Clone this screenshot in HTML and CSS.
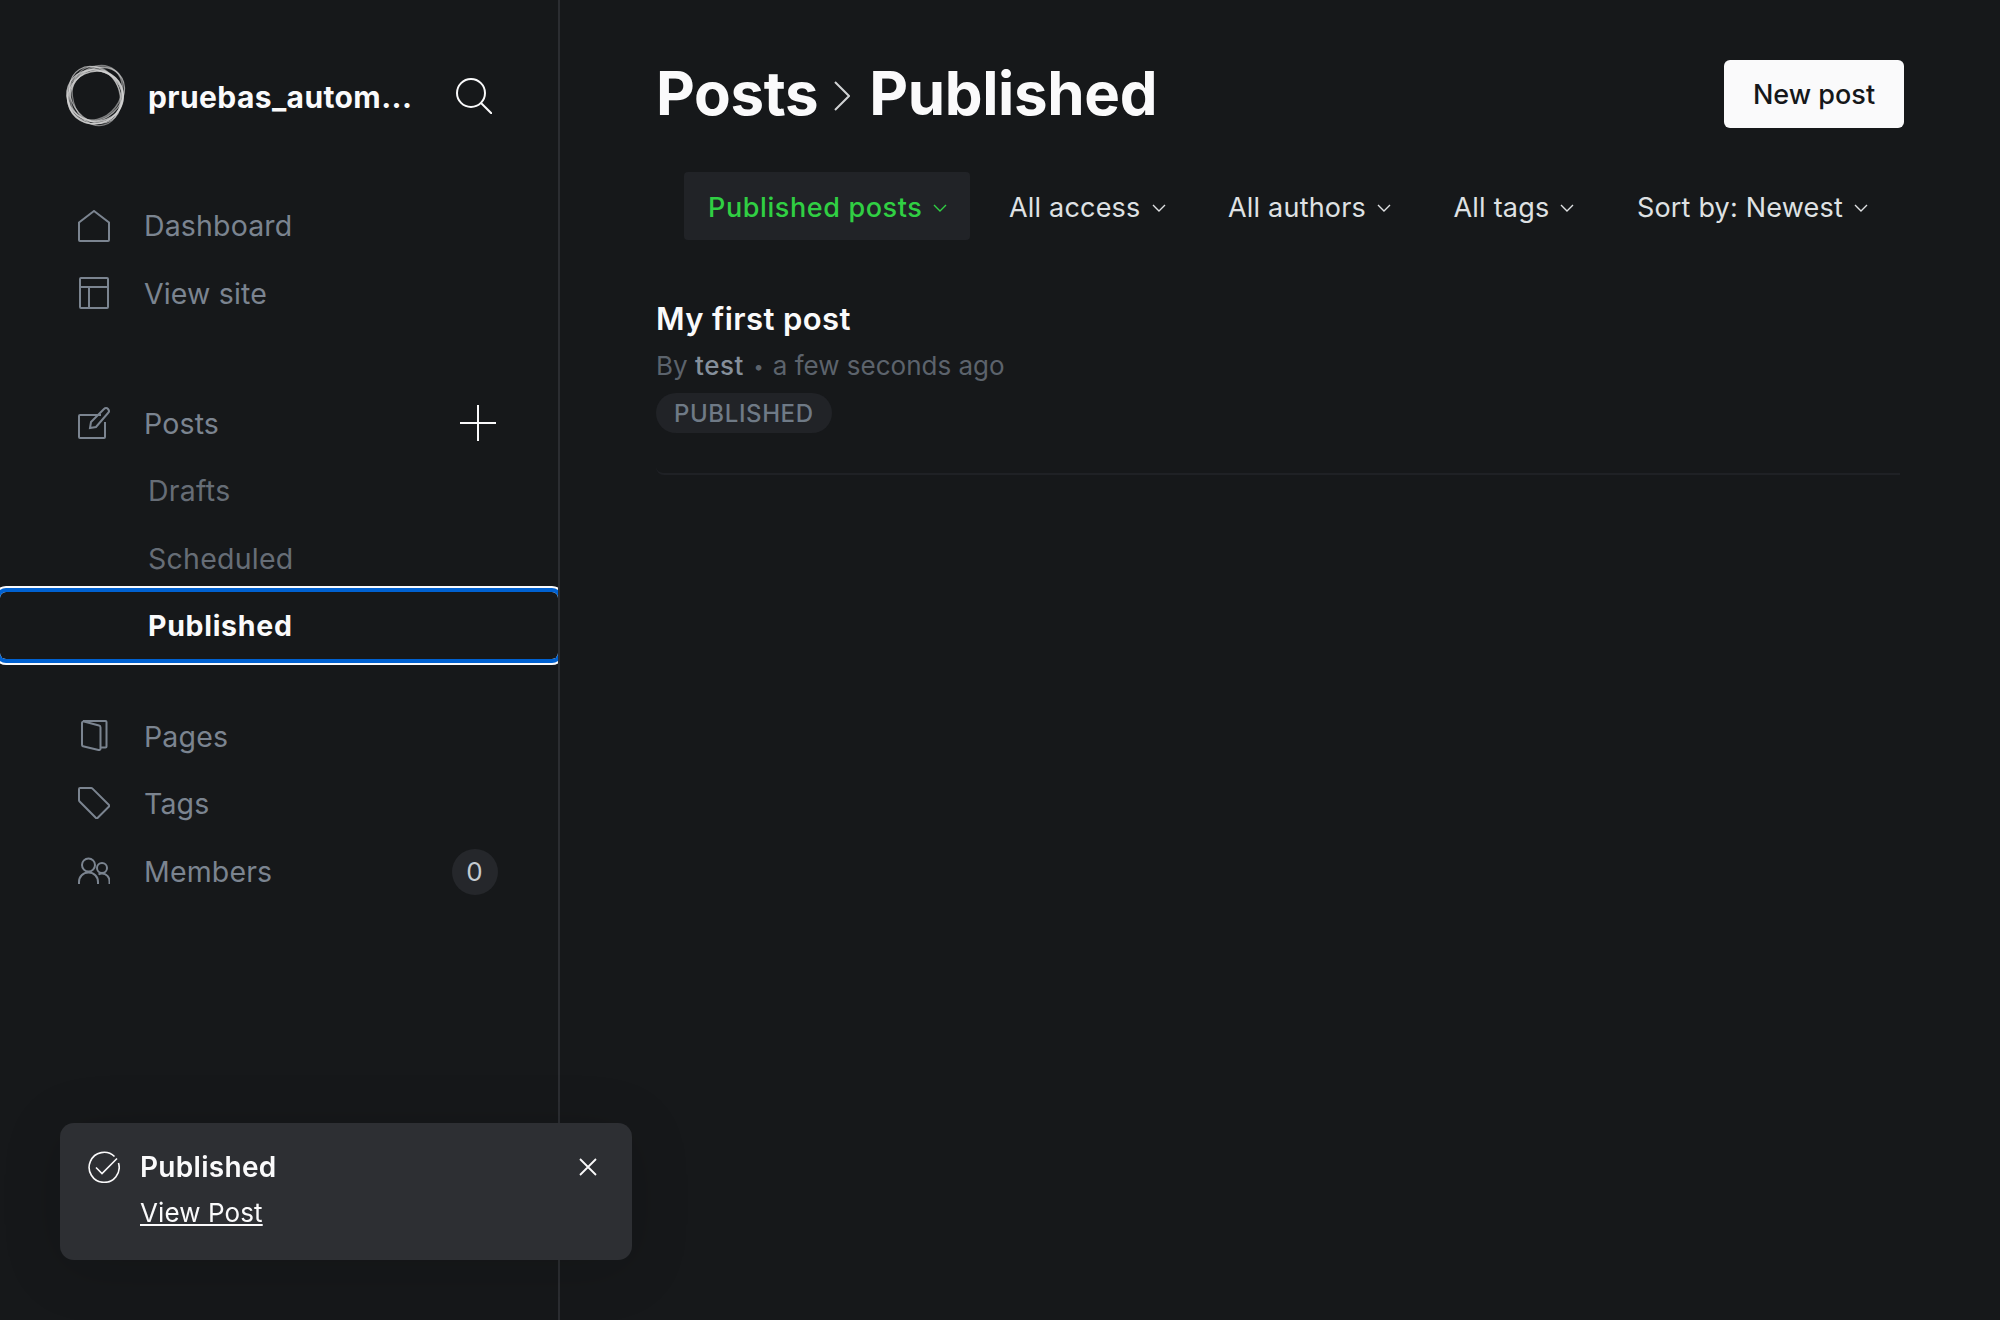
FILE: index.html
```html
<!DOCTYPE html>
<html>

<head>
    <title>Posts - Published</title>
    <link rel="stylesheet" href="styles.css">
</head>

<body>
    <aside class="sidebar">
        <div class="brand">
            <svg class="brand-logo" viewBox="0 0 60 60" fill="none" stroke="#d4d4d4">
                <ellipse cx="28.500" cy="32" rx="28" ry="26" transform="rotate(-25 30 30)" stroke-width="1.600" opacity=".85" />
                <ellipse cx="29" cy="31.500" rx="28" ry="27" transform="rotate(-10 30 30)" stroke-width="1.200" opacity=".6" />
                <ellipse cx="31" cy="30" rx="30" ry="24.500" transform="rotate(-42 30 30)" stroke-width="1.300" opacity=".7" />
                <ellipse cx="32" cy="29" rx="29" ry="24" transform="rotate(-52 30 30)" stroke-width="1.500" opacity=".55" />
                <ellipse cx="29" cy="31" rx="28" ry="25.500" transform="rotate(20 30 30)" stroke-width="1.600" opacity=".8" />
                <ellipse cx="29.500" cy="30.500" rx="30" ry="24" transform="rotate(58 30 30)" stroke-width="1.200" opacity=".7" />
                <ellipse cx="31" cy="30" rx="30" ry="23.500" transform="rotate(75 30 30)" stroke-width="1.200" opacity=".55" />
            </svg>
            <span class="brand-name">pruebas_autom...</span>
            <svg class="brand-search" viewBox="0 0 36 36" fill="none" stroke="#fafafb" stroke-width="2">
                <circle cx="15" cy="15" r="14" />
                <path d="M25 25l11 11" />
            </svg>
        </div>

        <ul class="nav">
            <li class="nav-item">
                <svg class="nav-icon" viewBox="0 0 32 32">
                    <path d="M1 12.500L16 1l15 11.500v17.500a1 1 0 0 1-1 1H2a1 1 0 0 1-1-1z" />
                </svg>
                <span>Dashboard</span>
            </li>
            <li class="nav-item">
                <svg class="nav-icon" viewBox="0 0 32 32">
                    <rect x="2" y="1" width="28" height="30" rx="1" />
                    <path d="M2 10h28M11 10v21" />
                </svg>
                <span>View site</span>
            </li>
        </ul>

        <ul class="nav nav-posts">
            <li class="nav-item">
                <svg class="nav-icon" viewBox="0 0 32 32">
                    <path d="M23 8H2a1 1 0 0 0-1 1v21a1 1 0 0 0 1 1h24a1 1 0 0 0 1-1V15" />
                    <path d="M12 21l1-6L26 2c1.200-1.200 3-1.200 4 0s1.200 3 0 4L18 20z" />
                </svg>
                <span>Posts</span>
                <svg class="nav-add" viewBox="0 0 36 36" fill="none" stroke="#fafafb" stroke-width="2">
                    <path d="M18 0v36M0 18h36" />
                </svg>
            </li>
            <li class="nav-item nav-sub">Drafts</li>
            <li class="nav-item nav-sub">Scheduled</li>
            <li class="nav-item nav-sub nav-current">Published</li>
        </ul>

        <ul class="nav nav-rest">
            <li class="nav-item">
                <svg class="nav-icon" viewBox="0 0 32 32">
                    <path d="M5 1h22.500a1 1 0 0 1 1 1v24.500a1 1 0 0 1-1 1H23" />
                    <path d="M4 3a1.500 1.500 0 0 1 2-1.500l15 4a2 2 0 0 1 1.500 2v21a1.500 1.500 0 0 1-2 1.500L6 26.500a2 2 0 0 1-2-2z" />
                </svg>
                <span>Pages</span>
            </li>
            <li class="nav-item">
                <svg class="nav-icon" viewBox="0 0 32 32">
                    <path d="M1 2a1 1 0 0 1 1-1h11a2 2 0 0 1 1.500.6L31 18a1 1 0 0 1 0 1.500L19.500 31a1 1 0 0 1-1.500 0L1.600 14.500A2 2 0 0 1 1 13z" />
                </svg>
                <span>Tags</span>
            </li>
            <li class="nav-item">
                <svg class="nav-icon" viewBox="0 0 32 32">
                    <circle cx="10.500" cy="9" r="6.500" />
                    <path d="M1 28v-2c0-5.500 4-9.500 9.500-9.500S20 20.500 20 26v2" />
                    <circle cx="24" cy="12" r="5" />
                    <path d="M20.500 18.500c1-.7 2.200-1 3.500-1 4.500 0 7.500 3.500 7.500 8V28" />
                </svg>
                <span>Members</span>
                <span class="nav-count">0</span>
            </li>
        </ul>
    </aside>

    <main class="content">
        <header class="page-head">
            <h1 class="page-title">
                <span>Posts</span>
                <svg class="title-arrow" viewBox="0 0 16 30" fill="none" stroke="#d0d2d4" stroke-width="2">
                    <path d="M1 1l14 14L1 29" />
                </svg>
                <span>Published</span>
            </h1>
            <button class="new-post">New post</button>
        </header>

        <div class="filters">
            <div class="filter filter-active">Published posts
                <svg class="caret" viewBox="0 0 14 8"><path d="M1 1l6 6 6-6" /></svg>
            </div>
            <div class="filter">All access
                <svg class="caret" viewBox="0 0 14 8"><path d="M1 1l6 6 6-6" /></svg>
            </div>
            <div class="filter">All authors
                <svg class="caret" viewBox="0 0 14 8"><path d="M1 1l6 6 6-6" /></svg>
            </div>
            <div class="filter">All tags
                <svg class="caret" viewBox="0 0 14 8"><path d="M1 1l6 6 6-6" /></svg>
            </div>
            <div class="filter">Sort by: Newest
                <svg class="caret" viewBox="0 0 14 8"><path d="M1 1l6 6 6-6" /></svg>
            </div>
        </div>

        <article class="post">
            <h2 class="post-title">My first post</h2>
            <p class="post-meta">By <b>test</b> <i>•</i> a few seconds ago</p>
            <span class="post-status">PUBLISHED</span>
        </article>
    </main>

    <div class="toast">
        <svg class="toast-check" viewBox="0 0 32 32" fill="none" stroke="#fafafb" stroke-width="1.600">
            <path d="M26.500 5.500A15 15 0 1 0 30.500 12" />
            <path d="M8 16.500l6 6L29 7.500" />
        </svg>
        <div class="toast-body">
            <div class="toast-title">Published</div>
            <a class="toast-link" href="#">View Post</a>
        </div>
        <svg class="toast-close" viewBox="0 0 18 18" fill="none" stroke="#fafafb" stroke-width="1.800">
            <path d="M1 1l16 16M17 1L1 17" />
        </svg>
    </div>
</body>

</html>
```

FILE: styles.css
```css
* {
    box-sizing: border-box;
}

body {
    margin: 0;
    height: 1320px;
    display: flex;
    overflow: hidden;
    background: #16181a;
    color: #fafafb;
    font-family: Inter, "Noto Sans", sans-serif;
}

.sidebar {
    width: 560px;
    flex-shrink: 0;
    border-right: 2px solid #2b2d31;
    overflow: hidden;
}

.brand {
    height: 192px;
    padding: 0 66px;
    display: flex;
    align-items: center;
}

.brand-logo {
    width: 60px;
    height: 60px;
    margin-top: -2px;
    overflow: visible;
}

.brand-name {
    margin-left: 22px;
    margin-top: 2px;
    font-size: 30px;
    font-weight: 700;
    letter-spacing: 0.4px;
}

.brand-search {
    width: 36px;
    height: 36px;
    margin-left: auto;
}

.nav {
    list-style-type: none;
    margin: 0;
    padding: 0;
}

.nav-posts {
    margin-top: 63px;
}

.nav-rest {
    margin-top: 43px;
}

.nav-rest .nav-item:last-child {
    padding-top: 2px;
}

.nav-item {
    height: 67.4px;
    padding: 0 62px 0 78px;
    display: flex;
    align-items: center;
    font-size: 28.5px;
    letter-spacing: 0.15px;
    color: #7b8490;
}

.nav-icon {
    width: 32px;
    height: 32px;
    margin-right: 34px;
    fill: none;
    stroke: #7b8490;
    stroke-width: 2;
}

.nav-add {
    width: 36px;
    height: 36px;
    margin-left: auto;
}

.nav-count {
    width: 46px;
    height: 46px;
    margin-left: auto;
    margin-right: -1.5px;
    border-radius: 50%;
    background: #25272b;
    color: #c4cad0;
    display: flex;
    align-items: center;
    justify-content: center;
    font-size: 26px;
}

.nav-sub {
    padding-left: 148px;
    letter-spacing: 0.25px;
    color: #666d76;
}

.nav-current {
    color: #fafafb;
    font-weight: 700;
    letter-spacing: 0.7px;
    border-radius: 6px;
    box-shadow: 0 0 0 4px #0061d1, 0 0 0 6px #fafafb;
}

.content {
    flex-grow: 1;
    min-width: 0;
    padding: 0 96px;
}

.page-head {
    height: 188px;
    display: flex;
    align-items: center;
    justify-content: space-between;
}

.page-title {
    margin: -2px 0 0;
    display: flex;
    align-items: center;
    font-size: 60px;
    font-weight: 700;
    letter-spacing: -0.35px;
}

.title-arrow {
    width: 16px;
    height: 30px;
    margin: 6px 19px 0 16px;
}

.new-post {
    width: 180px;
    height: 68px;
    border: none;
    border-radius: 6px;
    background: #fafafb;
    color: #15171a;
    font-family: inherit;
    font-size: 27px;
    font-weight: 500;
}

.filters {
    height: 68px;
    margin-top: -16px;
    padding-left: 28px;
    display: flex;
    align-items: center;
    gap: 14.5px;
}

.filter {
    height: 68px;
    padding: 3px 24px 0;
    flex-shrink: 0;
    white-space: nowrap;
    display: flex;
    align-items: center;
    font-size: 27px;
    letter-spacing: 0.2px;
    color: #dfe1e3;
}

.filter-active {
    padding-right: 23px;
    background: #212327;
    border-radius: 4px;
    color: #30cf43;
    font-weight: 500;
    letter-spacing: 0.6px;
}

.caret {
    width: 14px;
    height: 8px;
    margin-left: 11px;
    fill: none;
    stroke: currentColor;
    stroke-width: 1.4;
}

.post {
    height: 235px;
    margin-right: 4px;
    padding-top: 61px;
    border-bottom: 2px solid #1f2125;
    border-bottom-left-radius: 8px;
}

.post-title {
    margin: 0;
    font-size: 31px;
    line-height: 36px;
    font-weight: 600;
    letter-spacing: 0.4px;
}

.post-meta {
    margin: 11px 0 0;
    font-size: 26px;
    line-height: 36px;
    color: #5c636c;
}

.post-meta b {
    font-weight: 500;
    letter-spacing: 0.6px;
    color: #858f9b;
}

.post-meta i {
    font-style: normal;
    font-size: 18px;
    padding: 0 2px;
    vertical-align: 2px;
}

.post-status {
    margin-top: 8px;
    height: 40px;
    padding: 0 18px;
    display: inline-flex;
    align-items: center;
    border-radius: 20px;
    background: #212327;
    color: #6f7a86;
    font-size: 24px;
    font-weight: 500;
    letter-spacing: 0.6px;
}

.toast {
    position: fixed;
    left: 60px;
    top: 1123px;
    width: 572px;
    height: 137px;
    padding: 28px 35px 0 28px;
    display: flex;
    align-items: flex-start;
    background: #2d2f33;
    border-radius: 14px;
    box-shadow: 0 8px 60px rgba(0, 0, 0, 0.15);
}

.toast-check {
    width: 32px;
    height: 32px;
    flex-shrink: 0;
    margin-right: 20px;
}

.toast-body {
    flex-grow: 1;
}

.toast-title {
    font-size: 28px;
    line-height: 32px;
    font-weight: 600;
    letter-spacing: 0.3px;
}

.toast-link {
    display: block;
    margin-top: 14px;
    font-size: 26px;
    line-height: 32px;
    letter-spacing: 0.1px;
    color: #fafafb;
}

.toast-close {
    width: 18px;
    height: 18px;
    margin-top: 7px;
}
```
